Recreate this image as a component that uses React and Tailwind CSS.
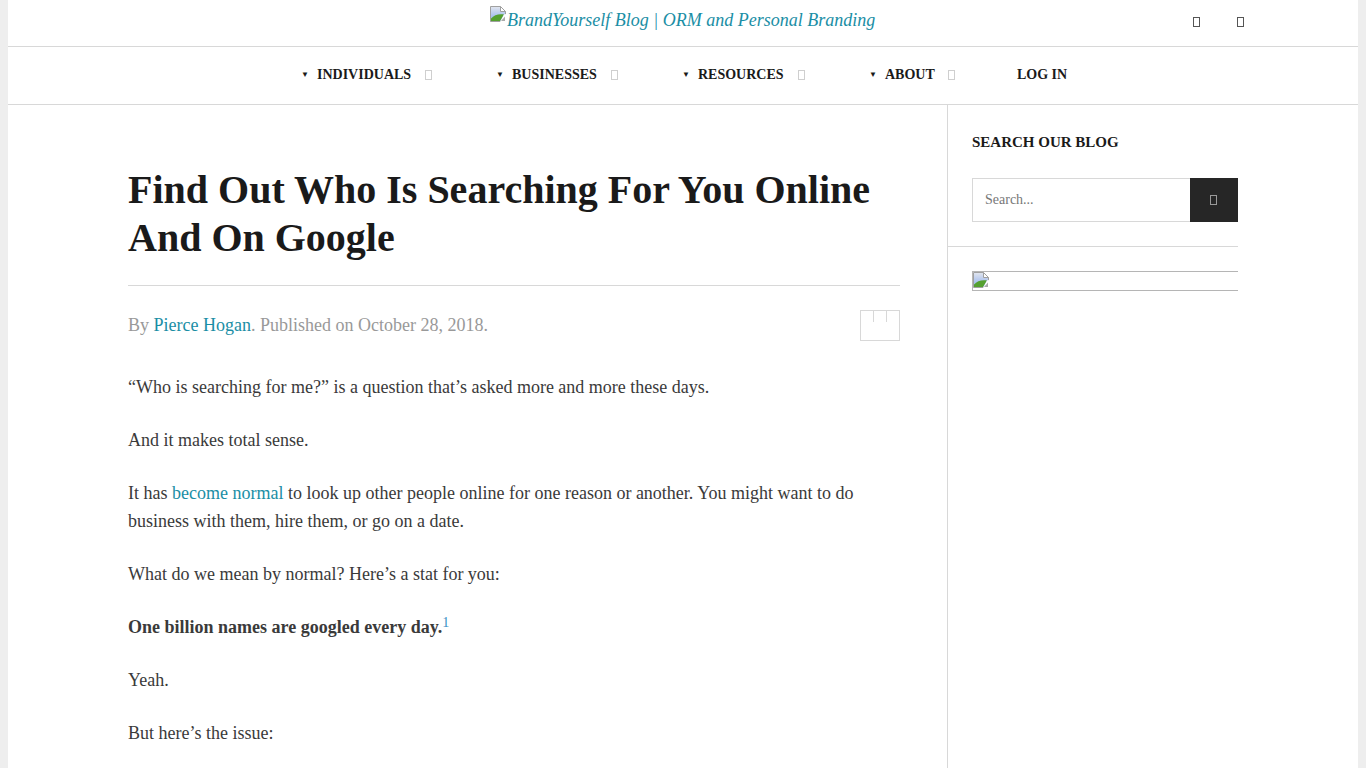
const serif = "font-['Liberation_Serif',serif]";

function BrokenImage({ className = "" }) {
  return (
    <svg viewBox="0 0 16 16" width="16" height="16" className={"shrink-0 " + className}>
      <defs>
        <linearGradient id="sky" x1="0" y1="0" x2="0" y2="1">
          <stop offset="0" stopColor="#e2e6ee" />
          <stop offset="0.65" stopColor="#a9c0ee" />
        </linearGradient>
      </defs>
      <path d="M0.5 0.5H10.5L15.5 5.5V15.5H0.5Z" fill="url(#sky)" stroke="#a0a0a0" />
      <path d="M10.5 0.5V5.5H15.5Z" fill="#ffffff" stroke="#a0a0a0" />
      <path d="M1 15V12.5C4 9 9 7.5 14 8.5L10 15Z" fill="#55a030" />
      <path d="M16 8L14 8.5L10 16H16Z" fill="#ffffff" />
      <path d="M11 15L15 10.5V15Z" fill="#aaaaaa" />
    </svg>
  );
}

function Tofu({ className = "" }) {
  return <span className={"inline-block w-[7px] h-[10px] border " + className} />;
}

function NavItem({ label, gap = "ml-[14px]" }) {
  return (
    <div className="flex items-center">
      <span className="text-[8px] leading-none text-[#1a1a1a] w-[16px]">▼</span>
      <span className="text-[14px] font-bold text-[#1a1a1a] leading-none">{label}</span>
      <Tofu className={gap + " border-[#cfcfcf]"} />
    </div>
  );
}

function Para({ children }) {
  return <p className="mb-[25px]">{children}</p>;
}

export default function App() {
  return (
    <div className={"h-[768px] overflow-hidden bg-[#eeeeee] px-2 " + serif}>
      <div className="bg-white h-full flex flex-col">
        <header className="h-[47px] border-b border-[#d8d8d8] flex items-center shrink-0">
          <div className="ml-[482px] flex items-start text-[18px] italic text-[#1a8ea5] leading-none mt-[-11px]">
            <BrokenImage />
            <span className="ml-px mt-[5px] whitespace-nowrap">BrandYourself Blog | ORM and Personal Branding</span>
          </div>
          <div className="ml-[318px] flex items-center gap-[37px] mt-[-3px]">
            <Tofu className="border-[#555555]" />
            <Tofu className="border-[#555555]" />
          </div>
        </header>
        <nav className="h-[58px] border-b border-[#d8d8d8] flex items-center pl-[293px] pb-[2px] shrink-0">
          <div className="w-[195px]"><NavItem label="INDIVIDUALS" /></div>
          <div className="w-[186px]"><NavItem label="BUSINESSES" /></div>
          <div className="w-[187px]"><NavItem label="RESOURCES" /></div>
          <div className="w-[148px]"><NavItem label="ABOUT" gap="ml-[13px]" /></div>
          <span className="text-[14px] font-bold text-[#1a1a1a] leading-none">LOG IN</span>
        </nav>
        <div className="flex flex-1 min-h-0">
          <main className="w-[940px] shrink-0 border-r border-[#d8d8d8] pl-[120px] pr-[47px] pt-[61px]">
            <h1 className="text-[40px] leading-[48px] font-bold text-[#1a1a1a]">
              Find Out Who Is Searching For You Online And On Google
            </h1>
            <div className="mt-[23px] border-t border-[#d8d8d8] pt-[24px] flex justify-between items-start">
              <div className="text-[18px] leading-[30px] text-[#999999]">
                By <a className="text-[#1a8ea5]">Pierce Hogan</a>. Published on October 28, 2018.
              </div>
              <div className="relative w-[40px] h-[31px] border border-[#d8d8d8]">
                <span className="absolute left-[12px] top-0 w-px h-[11px] bg-[#d8d8d8]" />
                <span className="absolute left-[25px] top-0 w-px h-[11px] bg-[#d8d8d8]" />
              </div>
            </div>
            <div className="mt-[32px] text-[18px] leading-[28px] text-[#3a3a3a]">
              <Para>“Who is searching for me?” is a question that’s asked more and more these days.</Para>
              <Para>And it makes total sense.</Para>
              <Para>
                It has <a className="text-[#1a8ea5]">become normal</a> to look up other people online for one reason or another. You might want to do business with them, hire them, or go on a date.
              </Para>
              <Para>What do we mean by normal? Here’s a stat for you:</Para>
              <Para>
                <strong className="font-bold">One billion names are googled every day.</strong>
                <span className="relative top-[-6px] text-[14px] leading-none text-[#3b8fc4]">1</span>
              </Para>
              <Para>Yeah.</Para>
              <Para>But here’s the issue:</Para>
            </div>
          </main>
          <aside className="flex-1 min-w-0">
            <div className="mx-6 pt-[28px] w-[266px]">
              <h2 className="text-[15px] leading-[18px] font-bold text-[#1a1a1a]">SEARCH OUR BLOG</h2>
              <div className="mt-[27px] flex h-[44px]">
                <div className="flex-1 border border-r-0 border-[#d8d8d8] flex items-center pl-3 pb-[2px] text-[14px] text-[#777777]">Search...</div>
                <div className="w-[48px] bg-[#262626] flex items-center justify-center">
                  <Tofu className="border-[#999999] mr-[2px]" />
                </div>
              </div>
            </div>
            <div className="w-[290px] mt-6 border-t border-[#d8d8d8]" />
            <div className="ml-6 mt-6 w-[266px] h-[20px] border-y border-l border-[#b5b5b5]">
              <BrokenImage />
            </div>
          </aside>
        </div>
      </div>
    </div>
  );
}
